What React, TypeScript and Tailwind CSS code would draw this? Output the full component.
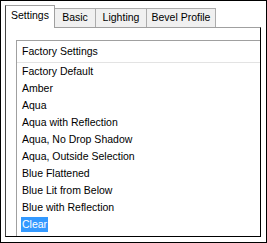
import React from "react";

const items = [
  "Factory Default",
  "Amber",
  "Aqua",
  "Aqua with Reflection",
  "Aqua, No Drop Shadow",
  "Aqua, Outside Selection",
  "Blue Flattened",
  "Blue Lit from Below",
  "Blue with Reflection",
  "Clear",
];

export default function App() {
  return (
    <div
      className="w-[267px] h-[243px] border border-black bg-white flex flex-col pl-[4px] pt-[3px] pr-[5px] pb-[5px] overflow-hidden text-[10.5px] text-black"
      style={{ fontFamily: '"Liberation Sans", Arial, sans-serif' }}
    >
      <div className="flex items-end h-[23px] shrink-0 relative z-10">
        <div className="w-[50px] h-[23px] bg-white border-l border-t border-r border-l-[#444] border-t-[#a0a0a0] border-r-[#a0a0a0] flex items-center justify-center pb-[2px] mb-[-1px]">
          Settings
        </div>
        <div className="w-[41px] h-[19px] bg-[#f0f0f0] border-t border-r border-[#acacac] flex items-center justify-center">
          Basic
        </div>
        <div className="w-[51px] h-[19px] bg-[#f0f0f0] border-t border-r border-[#acacac] flex items-center justify-center">
          Lighting
        </div>
        <div className="w-[69px] h-[19px] bg-[#f0f0f0] border-t border-r border-[#acacac] flex items-center justify-center">
          Bevel Profile
        </div>
      </div>
      <div className="flex-1 border-t border-t-[#a0a0a0] border-l border-l-[#444] border-r border-r-black border-b border-b-black overflow-hidden pl-[10px] pt-[12px]">
        <div className="w-[260px] h-[220px] border-t border-l border-[#a0a0a0] bg-white">
          <div className="h-[22px] border-b border-[#e3e3e3] flex items-center pl-[5px] pt-[1px]">
            Factory Settings
          </div>
          {items.map((it, i) => (
            <div key={i} className="h-[17px] flex items-center pl-[4px]">
              <span
                className={
                  i === items.length - 1
                    ? "bg-[#3399ff] text-white px-[1px] h-[15px] leading-[15px]"
                    : "px-[1px] h-[15px] leading-[15px]"
                }
              >
                {it}
              </span>
            </div>
          ))}
        </div>
      </div>
    </div>
  );
}
